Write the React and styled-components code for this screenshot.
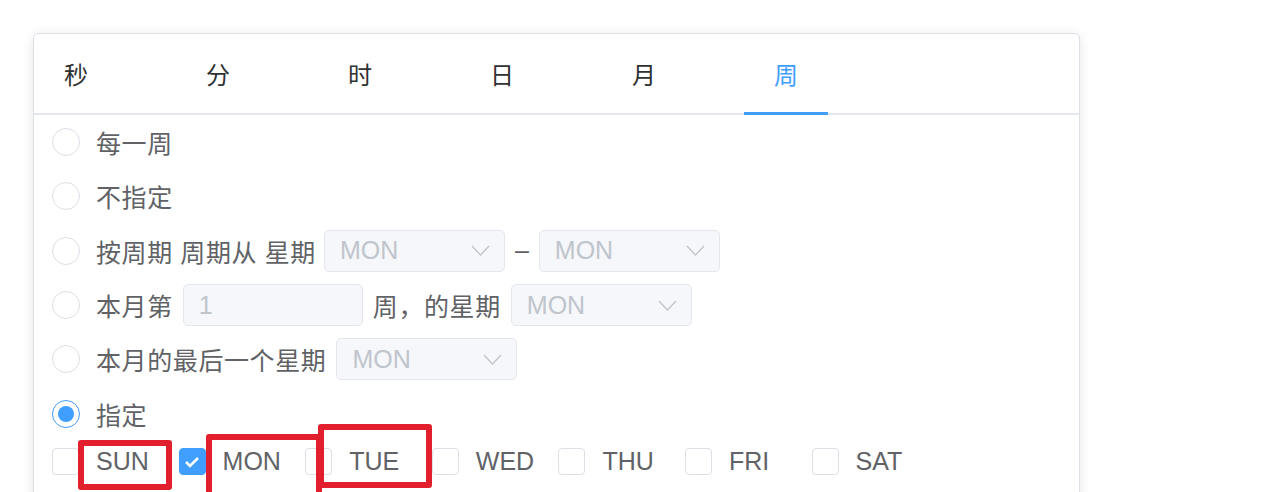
import React from "react";
import styled, { createGlobalStyle } from "styled-components";

const GlobalStyle = createGlobalStyle`
  body {
    margin: 0;
    background: #fff;
    font-family: "Liberation Sans", "Noto Sans CJK SC", sans-serif;
  }
`;

const Page = styled.div`
  position: relative;
  width: 1280px;
  height: 492px;
  overflow: hidden;
  padding: 33px 0 0 33px;
  box-sizing: border-box;
`;

const Card = styled.div`
  width: 1047px;
  height: 520px;
  box-sizing: border-box;
  border: 1px solid #dcdfe6;
  border-radius: 5px;
  box-shadow: 0 2px 12px rgba(0, 0, 0, 0.1);
  background: #fff;
`;

const TabBar = styled.div`
  display: flex;
  gap: 58px;
  height: 79px;
  border-bottom: 2px solid #e4e7ed;
`;

const Tab = styled.div`
  position: relative;
  width: 84px;
  display: flex;
  align-items: center;
  justify-content: center;
  font-size: 24px;
  color: ${({ active }) => (active ? "#409eff" : "#303133")};

  &::after {
    content: "";
    display: ${({ active }) => (active ? "block" : "none")};
    position: absolute;
    left: 0;
    right: 0;
    bottom: -2px;
    height: 3px;
    background: #409eff;
  }
`;

const Body = styled.div`
  padding: 0 0 0 18px;
`;

const Row = styled.div`
  display: flex;
  align-items: center;
  height: 54.3px;
  font-size: 25px;
  color: #606266;
`;

const Radio = styled.span`
  box-sizing: border-box;
  width: 28px;
  height: 28px;
  border-radius: 50%;
  border: 1px solid ${({ checked }) => (checked ? "#409eff" : "#dcdfe6")};
  background: #fff;
  margin-right: 16px;
  display: flex;
  align-items: center;
  justify-content: center;
  flex-shrink: 0;

  &::after {
    content: "";
    display: ${({ checked }) => (checked ? "block" : "none")};
    width: 16px;
    height: 16px;
    border-radius: 50%;
    background: #409eff;
  }
`;

const Label = styled.span`
  white-space: pre;
  letter-spacing: 0.6px;
  margin-left: ${({ before }) => before || 0}px;
  margin-right: ${({ gap }) => gap || 0}px;
`;

const SelectBox = styled.div`
  box-sizing: border-box;
  width: ${({ w }) => w || 181}px;
  height: 42px;
  border: 1px solid #e4e7ed;
  border-radius: 5px;
  background: #f5f7fa;
  color: #c0c4cc;
  display: flex;
  align-items: center;
  justify-content: space-between;
  padding: 0 14px 0 15px;
  font-size: 25px;
`;

const Dash = styled.span`
  margin: 0 10px;
  color: #606266;
`;

const DayGrid = styled.div`
  display: grid;
  grid-template-columns: repeat(7, 126.6px);
  align-items: center;
  height: 40px;
  margin-top: 1px;
`;

const Day = styled.div`
  display: flex;
  align-items: center;
  font-size: 25px;
  color: #606266;
`;

const Box = styled.span`
  box-sizing: border-box;
  width: 27px;
  height: 27px;
  border-radius: 4px;
  border: 1px solid ${({ checked }) => (checked ? "#409eff" : "#dcdfe6")};
  background: ${({ checked }) => (checked ? "#409eff" : "#fff")};
  margin-right: 17px;
  display: flex;
  align-items: center;
  justify-content: center;
`;

const Mark = styled.div`
  position: absolute;
  box-sizing: border-box;
  border: 6px solid #e2202d;
  border-radius: 3px;
`;

const Chevron = () => (
  <svg width="19" height="11" viewBox="0 0 19 11">
    <polyline points="1,1 9.5,10 18,1" fill="none" stroke="#c0c4cc" strokeWidth="1.3" />
  </svg>
);

const Select = ({ w }) => (
  <SelectBox w={w}>
    <span>MON</span>
    <Chevron />
  </SelectBox>
);

const tabs = ["秒", "分", "时", "日", "月", "周"];
const days = ["SUN", "MON", "TUE", "WED", "THU", "FRI", "SAT"];

export default function App() {
  return (
    <Page>
      <GlobalStyle />
      <Card>
        <TabBar>
          {tabs.map((t) => (
            <Tab key={t} active={t === "周"}>
              {t}
            </Tab>
          ))}
        </TabBar>
        <Body>
          <Row>
            <Radio />
            <Label>每一周</Label>
          </Row>
          <Row>
            <Radio />
            <Label>不指定</Label>
          </Row>
          <Row>
            <Radio />
            <Label gap={8}>按周期 周期从 星期</Label>
            <Select />
            <Dash>–</Dash>
            <Select />
          </Row>
          <Row>
            <Radio />
            <Label gap={10}>本月第</Label>
            <SelectBox w={180}>
              <span>1</span>
            </SelectBox>
            <Label before={10} gap={10}>
              周，的星期
            </Label>
            <Select />
          </Row>
          <Row>
            <Radio />
            <Label gap={10}>本月的最后一个星期</Label>
            <Select />
          </Row>
          <Row>
            <Radio checked />
            <Label>指定</Label>
          </Row>
          <DayGrid>
            {days.map((d) => (
              <Day key={d}>
                <Box checked={d === "MON"}>
                  {d === "MON" && (
                    <svg width="16" height="12" viewBox="0 0 16 12">
                      <polyline
                        points="2,6 6,10 14,2"
                        fill="none"
                        stroke="#fff"
                        strokeWidth="2.6"
                      />
                    </svg>
                  )}
                </Box>
                {d}
              </Day>
            ))}
          </DayGrid>
        </Body>
      </Card>
      <Mark style={{ left: 78, top: 440, width: 94, height: 50 }} />
      <Mark style={{ left: 206, top: 434, width: 116, height: 70 }} />
      <Mark style={{ left: 318, top: 424, width: 114, height: 64 }} />
    </Page>
  );
}
